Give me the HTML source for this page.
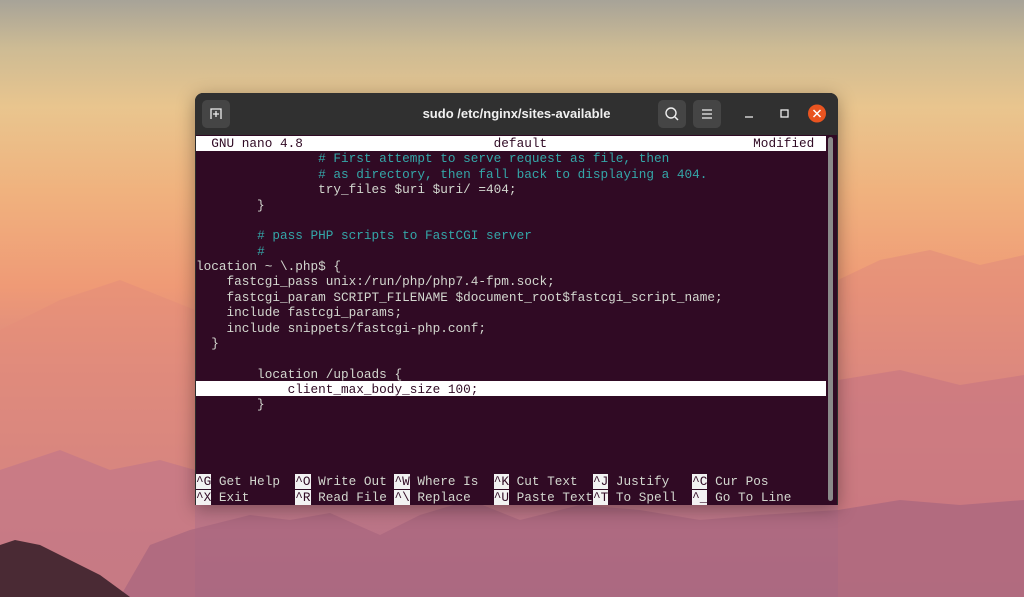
<!DOCTYPE html>
<html><head><meta charset="utf-8"><style>
html,body{margin:0;padding:0}
body{width:1024px;height:597px;overflow:hidden;position:relative;
background:linear-gradient(180deg,#a7a398 0%,#cdbb94 8%,#e9c58e 18%,#f0b27e 32%,#ef9a76 48%,#d98780 62%,#c57a88 78%,#b06f86 100%);}
svg.bg{position:absolute;left:0;top:0}
.win{position:absolute;left:195px;top:93px;width:643px;height:412px;background:#2c2c2c;border-radius:8px 8px 0 0;box-shadow:0 4px 18px rgba(0,0,0,.35);overflow:hidden}
.title{position:absolute;left:0;top:0;width:643px;height:42px;background:#303030;color:#f0f0f0;font:bold 13px "Liberation Sans",sans-serif;text-align:center;line-height:41px}
.btn{position:absolute;top:7px;width:28px;height:28px;background:#454545;border-radius:5px}
.term{position:absolute;left:1px;top:42px;width:641px;height:370px;background:#300a24}
pre{margin:0;position:absolute;left:0;top:1px;font:12.72px/15.375px "Liberation Mono",monospace;color:#d3d7cf;white-space:pre}
.c{color:#34a6a8}
.hl{position:absolute;left:0;width:630px;height:15px;background:#fff}
.inv{background:#f2f2f2;color:#300a24}
.sb{position:absolute;left:632px;top:2px;width:5px;height:364px;background:#8a8a8a;border-radius:3px}
</style></head><body>
<svg class="bg" width="1024" height="597">
<path d="M0 330 L60 300 L120 280 L170 300 L195 310 L195 597 L0 597Z" fill="#e48d7a" opacity=".6"/>
<path d="M838 280 L880 260 L930 250 L980 265 L1024 255 L1024 597 L838 597Z" fill="#e08a7c" opacity=".55"/>
<path d="M838 380 L900 370 L960 385 L1024 375 L1024 597 L838 597Z" fill="#c77582" opacity=".6"/>
<path d="M0 470 L60 450 L110 470 L160 460 L195 470 L195 597 L0 597Z" fill="#c07488" opacity=".6"/>
<path d="M120 597 L150 545 L190 530 L250 515 L290 520 L330 513 L380 535 L420 515 L470 500 L520 520 L580 505 L640 510 L700 520 L760 515 L838 510 L900 500 L960 505 L1024 500 L1024 597Z" fill="#a9677f" opacity=".75"/>
<path d="M0 597 L0 545 L15 540 L40 545 L70 560 L100 575 L130 597Z" fill="#4a2a34"/>
</svg>
<div class="win">
<div class="title">sudo /etc/nginx/sites-available</div>
<div class="btn" style="left:7px"><svg width="28" height="28"><path d="M9 19V9h10v10M14 11v6M11 14h6" stroke="#eee" stroke-width="1.3" fill="none"/></svg></div>
<div class="btn" style="left:463px"><svg width="28" height="28"><circle cx="13" cy="13" r="5" stroke="#eee" stroke-width="1.4" fill="none"/><path d="M17 17l3 3" stroke="#eee" stroke-width="1.5"/></svg></div>
<div class="btn" style="left:498px"><svg width="28" height="28"><path d="M9 10h10M9 14h10M9 18h10" stroke="#eee" stroke-width="1.3"/></svg></div>
<svg style="position:absolute;left:530px;top:7px" width="110" height="28"><path d="M20 17h8" stroke="#eee" stroke-width="1.3"/><rect x="56" y="10" width="7" height="7" stroke="#eee" stroke-width="1.3" fill="none"/><circle cx="92" cy="13.5" r="9" fill="#e95420"/><path d="M88.5 10l7 7M95.5 10l-7 7" stroke="#fff" stroke-width="1.5"/></svg>
<div class="term">
<div class="hl" style="top:1px"></div>
<div class="hl" style="top:246px"></div>
<pre>  <span style="color:#300a24">GNU nano 4.8                         default                           Modified</span>
                <span class="c"># First attempt to serve request as file, then</span>
                <span class="c"># as directory, then fall back to displaying a 404.</span>
                try_files $uri $uri/ =404;
        }

        <span class="c"># pass PHP scripts to FastCGI server</span>
        <span class="c">#</span>
location ~ \.php$ {
    fastcgi_pass unix:/run/php/php7.4-fpm.sock;
    fastcgi_param SCRIPT_FILENAME $document_root$fastcgi_script_name;
    include fastcgi_params;
    include snippets/fastcgi-php.conf;
  }

        location /uploads {
<span style="color:#300a24">            client_max_body_size 100;</span>
        }




<span class="inv">^G</span> Get Help  <span class="inv">^O</span> Write Out <span class="inv">^W</span> Where Is  <span class="inv">^K</span> Cut Text  <span class="inv">^J</span> Justify   <span class="inv">^C</span> Cur Pos
<span class="inv">^X</span> Exit      <span class="inv">^R</span> Read File <span class="inv">^\</span> Replace   <span class="inv">^U</span> Paste Text<span class="inv">^T</span> To Spell  <span class="inv">^_</span> Go To Line</pre>
<div class="sb"></div>
</div>
</div>
</body></html>
